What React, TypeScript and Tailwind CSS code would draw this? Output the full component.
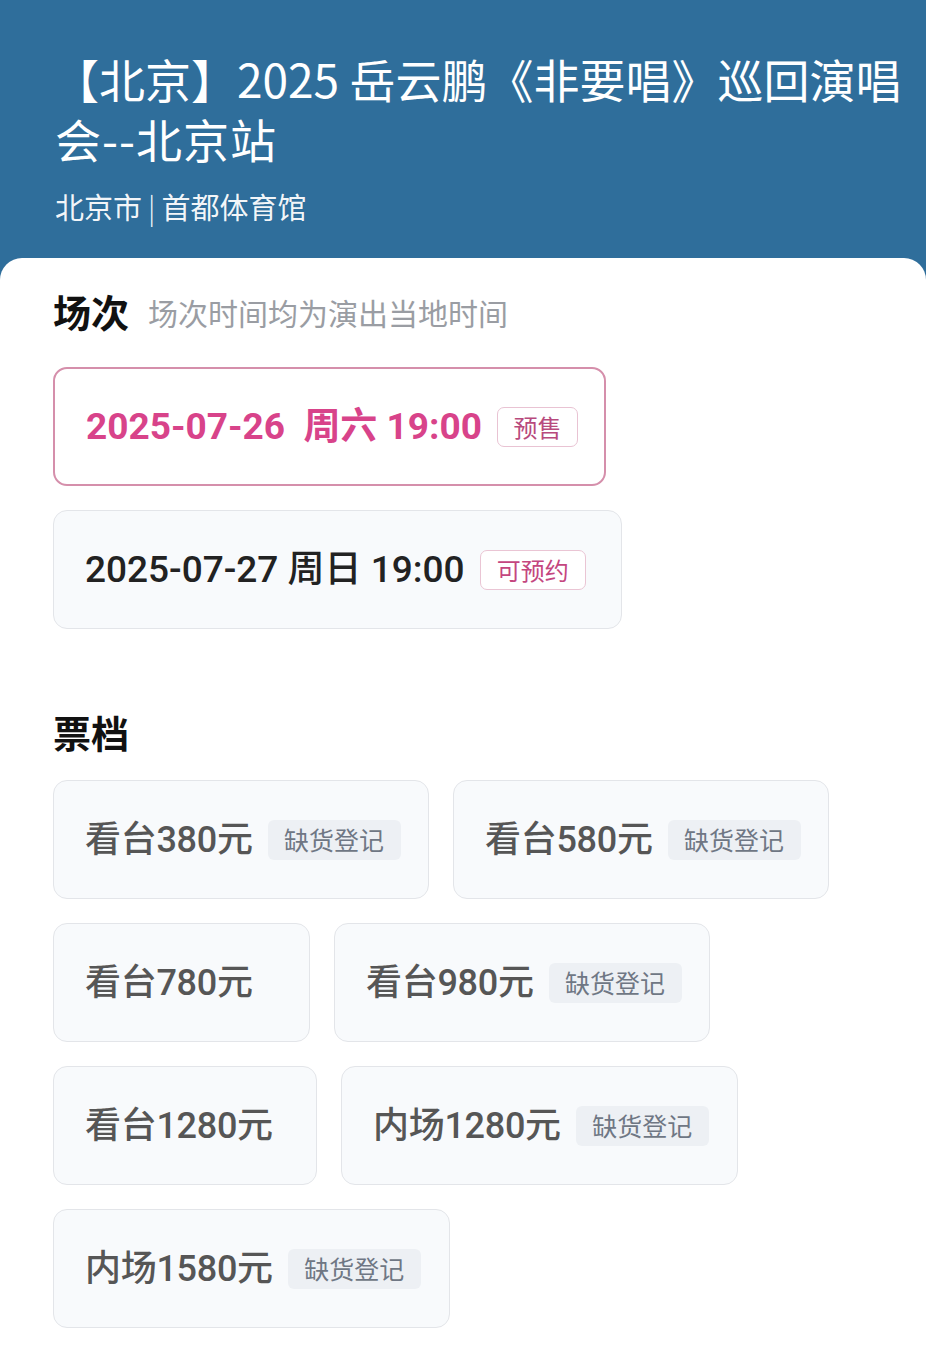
const font = { fontFamily: '"Noto Sans CJK SC", "Noto Sans", sans-serif' };
const numFont = { fontFamily: 'Roboto, "Noto Sans CJK SC", sans-serif' };

type Ticket = { name: string; soldOut: boolean; w: string };

const rows: Ticket[][] = [
  [
    { name: "看台380元", soldOut: true, w: "w-[376px]" },
    { name: "看台580元", soldOut: true, w: "w-[376px]" },
  ],
  [
    { name: "看台780元", soldOut: false, w: "w-[257px]" },
    { name: "看台980元", soldOut: true, w: "w-[376px]" },
  ],
  [
    { name: "看台1280元", soldOut: false, w: "w-[264px]" },
    { name: "内场1280元", soldOut: true, w: "w-[397px]" },
  ],
  [{ name: "内场1580元", soldOut: true, w: "w-[397px]" }],
];

const TicketCard = ({ t }: { t: Ticket }) => (
  <div
    className={`${t.w} h-[119px] flex items-center gap-[15px] pl-[31px] rounded-[14px] border border-[#e3e5e9] bg-[#f8fafc]`}
  >
    <span className="text-[36px] font-medium text-[#565656] tracking-[-0.3px]" style={numFont}>
      {t.name}
    </span>
    {t.soldOut && (
      <span className="h-[40px] w-[133px] flex items-center justify-center rounded-[6px] bg-[#edf0f4] text-[25px] text-[#6f7784]">
        缺货登记
      </span>
    )}
  </div>
);

export default function App() {
  return (
    <div className="w-[926px] min-h-[1371px] bg-[#2f6e9b]" style={font}>
      {/* header */}
      <div className="pl-[55px] pr-2 pt-[48px] h-[258px]">
        <h1 className="text-[46px] leading-[60px] text-white font-normal">
          <span className="-ml-[2px]">【北京】2025 岳云鹏《非要唱》巡回演唱</span>
          <br />
          <span className="tracking-[1px]">会--北京站</span>
        </h1>
        <p className="mt-[20px] text-[29px] leading-[36px] text-white/95">
          北京市<span className="mx-[6px] font-light">|</span>首都体育馆
        </p>
      </div>

      {/* body */}
      <div className="bg-white rounded-t-[22px] min-h-[1113px] px-[53px] pt-[22px] pb-10">
        <div className="h-[60px] flex items-center gap-[19px]">
          <h2 className="text-[38px] font-bold text-[#111111]">场次</h2>
          <span className="text-[30px] text-[#9a9da3] mt-[4px]">场次时间均为演出当地时间</span>
        </div>

        <div className="mt-[27px] flex flex-col gap-[24px]">
          <div className="w-[553px] h-[119px] flex items-center pl-[31px] rounded-[14px] border-2 border-[#d58fab] bg-white">
            <span className="text-[37px] font-bold text-[#d8438a]" style={numFont}>
              2025-07-26&nbsp; 周六 19:00
            </span>
            <span className="ml-[15px] h-[40px] w-[81px] flex items-center justify-center rounded-[7px] border border-[#e9c3d3] text-[24px] text-[#b84a7d]">
              预售
            </span>
          </div>
          <div className="w-[569px] h-[119px] flex items-center pl-[31px] rounded-[14px] border border-[#e3e5e9] bg-[#f8fafc]">
            <span className="text-[37px] font-medium text-[#222222]" style={numFont}>
              2025-07-27 周日 19:00
            </span>
            <span className="ml-[15px] h-[40px] w-[106px] flex items-center justify-center rounded-[7px] border border-[#eac5d4] bg-white text-[24px] text-[#c4467f]">
              可预约
            </span>
          </div>
        </div>

        <div className="mt-[72px] h-[60px] flex items-center">
          <h2 className="text-[38px] font-bold text-[#111111]">票档</h2>
        </div>

        <div className="mt-[19px] flex flex-col gap-[24px]">
          {rows.map((row, i) => (
            <div key={i} className="flex gap-[24px]">
              {row.map((t) => (
                <TicketCard key={t.name} t={t} />
              ))}
            </div>
          ))}
        </div>
      </div>
    </div>
  );
}
